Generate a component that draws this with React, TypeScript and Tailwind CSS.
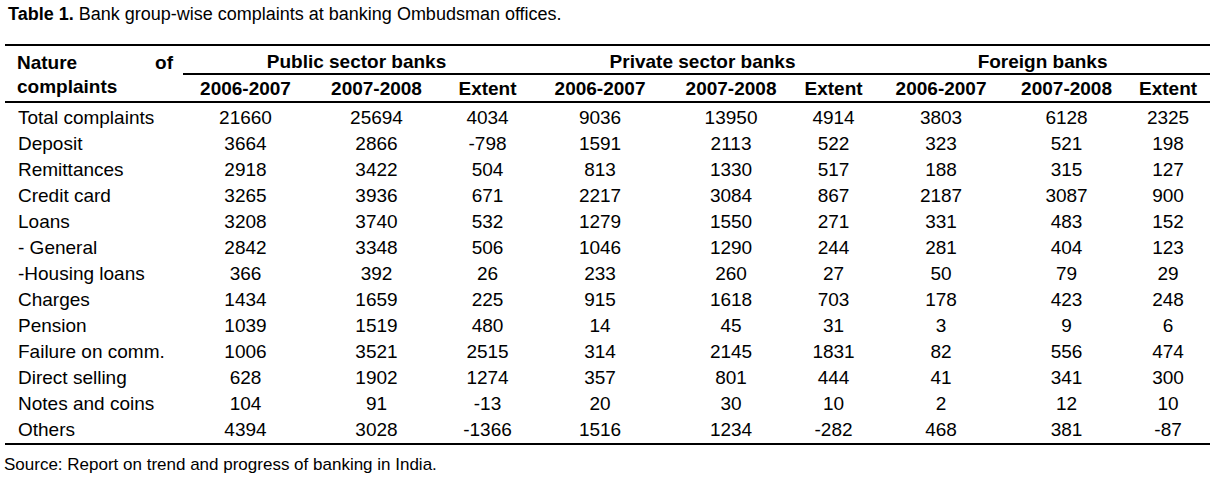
import React from 'react';

const GROUPS = ['Public sector banks', 'Private sector banks', 'Foreign banks'];
const SUBS = ['2006-2007', '2007-2008', 'Extent'];

// column widths in px, first one is the label column
const WIDTHS = [178, 125, 137, 85, 140, 122, 83, 132, 119, 84];

const ROWS: [string, number[]][] = [
  ['Total complaints', [21660, 25694, 4034, 9036, 13950, 4914, 3803, 6128, 2325]],
  ['Deposit', [3664, 2866, -798, 1591, 2113, 522, 323, 521, 198]],
  ['Remittances', [2918, 3422, 504, 813, 1330, 517, 188, 315, 127]],
  ['Credit card', [3265, 3936, 671, 2217, 3084, 867, 2187, 3087, 900]],
  ['Loans', [3208, 3740, 532, 1279, 1550, 271, 331, 483, 152]],
  ['- General', [2842, 3348, 506, 1046, 1290, 244, 281, 404, 123]],
  ['-Housing loans', [366, 392, 26, 233, 260, 27, 50, 79, 29]],
  ['Charges', [1434, 1659, 225, 915, 1618, 703, 178, 423, 248]],
  ['Pension', [1039, 1519, 480, 14, 45, 31, 3, 9, 6]],
  ['Failure on comm.', [1006, 3521, 2515, 314, 2145, 1831, 82, 556, 474]],
  ['Direct selling', [628, 1902, 1274, 357, 801, 444, 41, 341, 300]],
  ['Notes and coins', [104, 91, -13, 20, 30, 10, 2, 12, 10]],
  ['Others', [4394, 3028, -1366, 1516, 1234, -282, 468, 381, -87]],
];

export default function App() {
  return (
    <div className="w-[1215px] h-[483px] bg-white text-black font-['Liberation_Sans',Arial,sans-serif] overflow-hidden">
      <p className="pl-2 pt-[4px] text-[18px] leading-[20px]">
        <span className="font-bold">Table 1.</span> Bank group-wise complaints at banking Ombudsman offices.
      </p>

      <table className="ml-[5px] mt-[20px] border-collapse table-fixed w-[1205px] text-[19px]">
        <colgroup>
          {WIDTHS.map((w, i) => (
            <col key={i} style={{ width: w }} />
          ))}
        </colgroup>
        <thead className="font-bold">
          <tr className="border-t-2 border-black">
            <th
              rowSpan={2}
              className="pl-3 pr-[10px] pt-[3px] text-justify font-bold leading-[24px] border-b-2 border-black align-middle"
            >
              Nature of complaints
            </th>
            {GROUPS.map((g) => (
              <th key={g} colSpan={3} className="h-[29px] pt-[5px] text-center leading-[22px] border-b-2 border-black">
                {g}
              </th>
            ))}
          </tr>
          <tr>
            {GROUPS.map((g) =>
              SUBS.map((s) => (
                <th key={g + s} className="h-[28px] pt-[1px] text-center leading-[22px] border-b-2 border-black">
                  {s}
                </th>
              ))
            )}
          </tr>
        </thead>
        <tbody className="border-b-2 border-black">
          {ROWS.map(([label, vals], i) => (
            <tr key={label}>
              <td className={`pl-[13px] leading-[26px] ${i === 0 ? 'pt-[2px]' : ''}`}>{label}</td>
              {vals.map((v, j) => (
                <td key={j} className={`text-center leading-[26px] ${i === 0 ? 'pt-[2px]' : ''}`}>
                  {v}
                </td>
              ))}
            </tr>
          ))}
        </tbody>
      </table>

      <p className="pl-1 pt-[10px] text-[17px] leading-[20px]">
        Source: Report on trend and progress of banking in India.
      </p>
    </div>
  );
}
